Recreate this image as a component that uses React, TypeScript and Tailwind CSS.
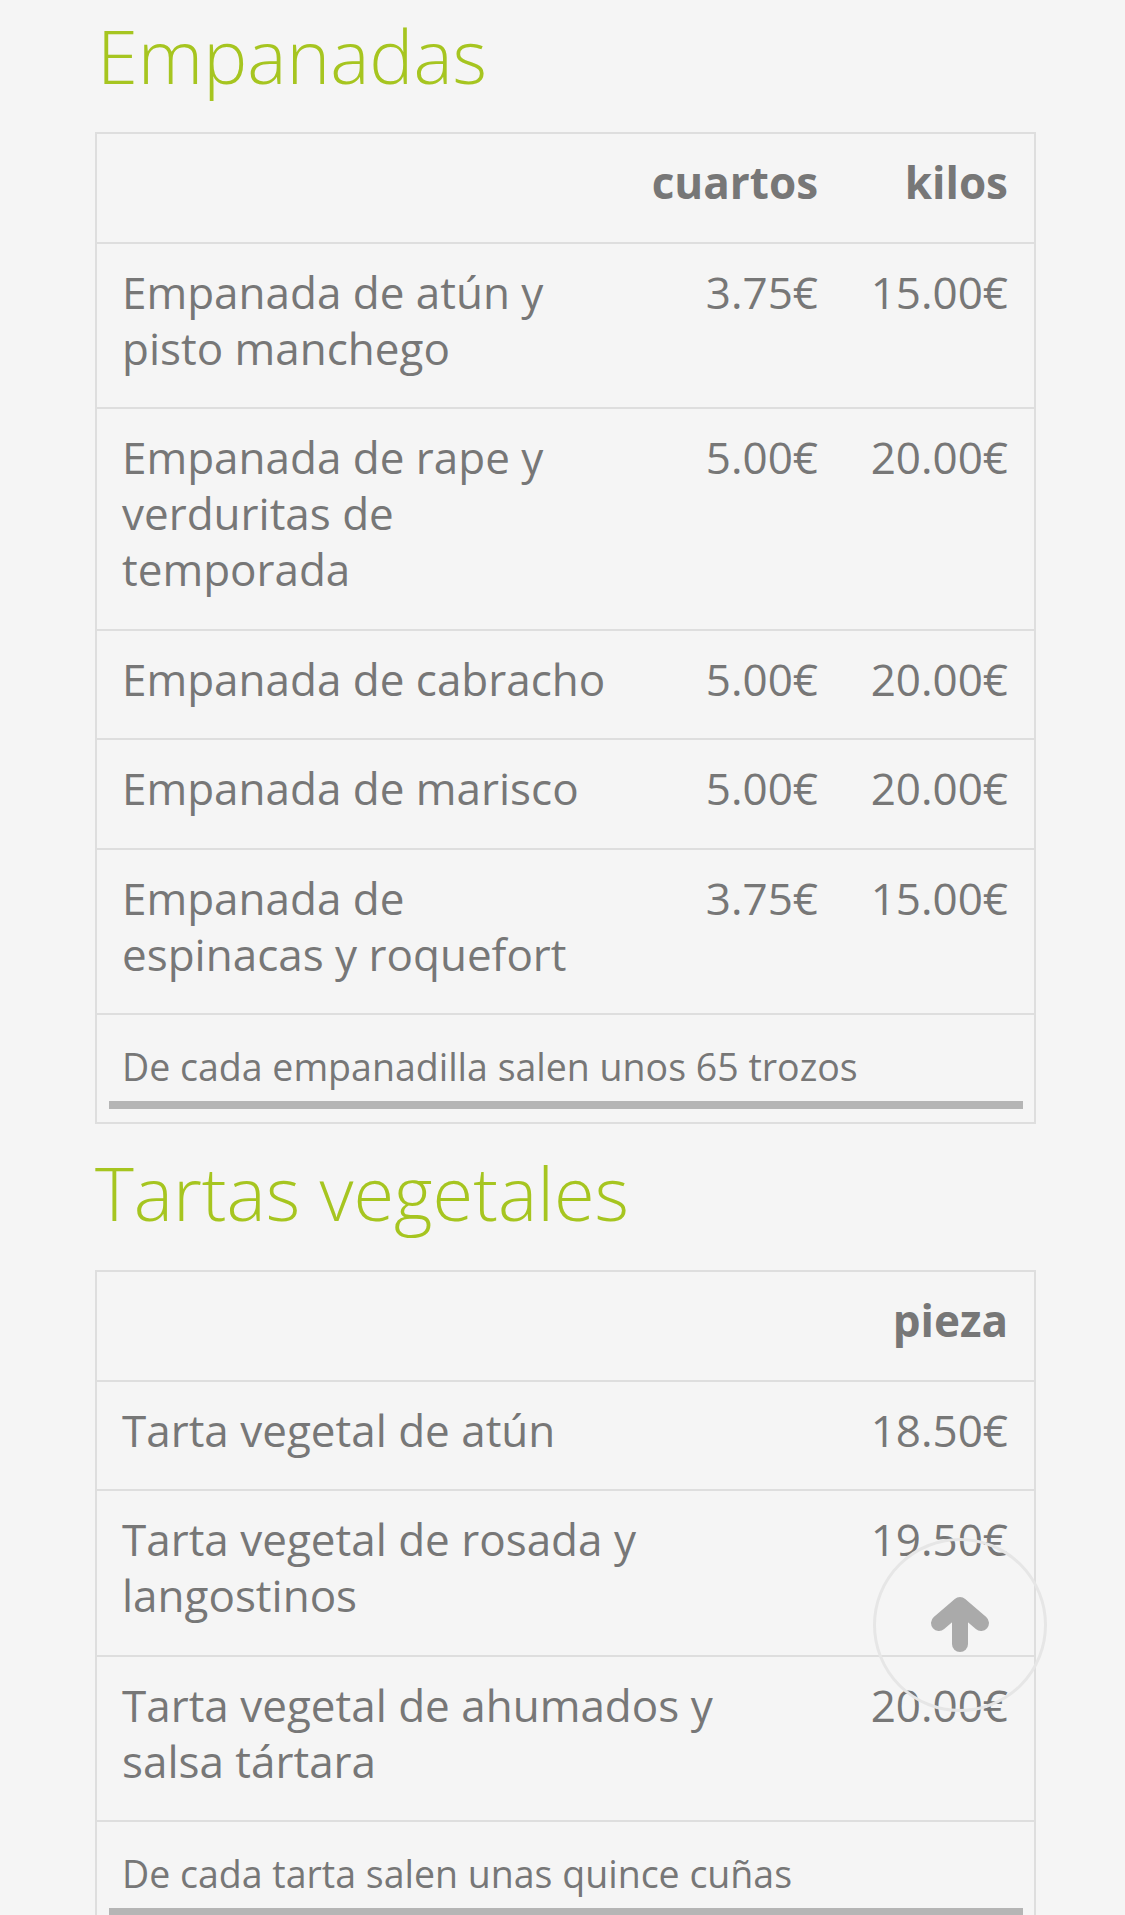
type Row = { name: string; prices: string[] }

const empanadas: Row[] = [
  { name: "Empanada de atún y pisto manchego", prices: ["3.75€", "15.00€"] },
  { name: "Empanada de rape y verduritas de temporada", prices: ["5.00€", "20.00€"] },
  { name: "Empanada de cabracho", prices: ["5.00€", "20.00€"] },
  { name: "Empanada de marisco", prices: ["5.00€", "20.00€"] },
  { name: "Empanada de espinacas y roquefort", prices: ["3.75€", "15.00€"] },
]

const tartas: Row[] = [
  { name: "Tarta vegetal de atún", prices: ["18.50€"] },
  { name: "Tarta vegetal de rosada y langostinos", prices: ["19.50€"] },
  { name: "Tarta vegetal de ahumados y salsa tártara", prices: ["20.00€"] },
]

function PriceTable({ cols, rows, note, wide }: { cols: string[]; rows: Row[]; note: string; wide?: boolean }) {
  const grid = wide ? "grid grid-cols-[747px_1fr]" : "grid grid-cols-[531px_216px_1fr]"
  return (
    <div className="ml-[95px] w-[941px] border-2 border-[#dedede]">
      <div className={`${grid} border-b-2 border-[#dedede] font-bold`}>
        <div className="pt-[20px] pb-[31.5px]" />
        {cols.map(c => (
          <div key={c} className="pt-[20px] pb-[31.5px] pr-[26px] text-right">{c}</div>
        ))}
      </div>
      {rows.map(r => (
        <div key={r.name} className={`${grid} border-b-2 border-[#dedede]`}>
          <div className="pl-[25px] pr-[20px] pt-[20px] pb-[31.5px]">{r.name}</div>
          {r.prices.map((p, i) => (
            <div key={i} className="pt-[20px] pb-[31.5px] pr-[26px] text-right">{p}</div>
          ))}
        </div>
      ))}
      <div className="pt-[28px] pb-[13px]">
        <p className="pl-[25px] text-[37.5px] leading-[48px]">{note}</p>
        <div className="mt-[10px] ml-[12px] mr-[11px] h-[8px] bg-[#b5b5b5]" />
      </div>
    </div>
  )
}

export default function App() {
  return (
    <div
      className="relative h-[1915px] w-[1125px] overflow-hidden bg-[#f5f5f5] text-[44px] leading-[56px] text-[#777777]"
      style={{ fontFamily: '"Open Sans", "Noto Sans", sans-serif' }}
    >
      <h2 className="ml-[97px] mt-[16px] mb-[36px] text-[74px] leading-[80px] font-light text-[#a6c520]">Empanadas</h2>
      <PriceTable cols={["cuartos", "kilos"]} rows={empanadas} note="De cada empanadilla salen unos 65 trozos" />

      <h2 className="ml-[95px] mt-[29px] mb-[37px] text-[74px] leading-[80px] font-light text-[#a6c520]">Tartas vegetales</h2>
      <PriceTable cols={["pieza"]} rows={tartas} note="De cada tarta salen unas quince cuñas" wide />

      <button className="absolute left-[873px] top-[1538px] flex h-[174px] w-[174px] items-center justify-center rounded-full border-[3px] border-[#e6e6e6]">
        <svg width="60" height="56" viewBox="0 0 60 56" fill="none" stroke="#aaaaaa" strokeWidth="16" strokeLinecap="round" strokeLinejoin="round">
          <path d="M9 26 L30 8 L51 26" />
          <path d="M30 9 V47" />
        </svg>
      </button>
    </div>
  )
}
